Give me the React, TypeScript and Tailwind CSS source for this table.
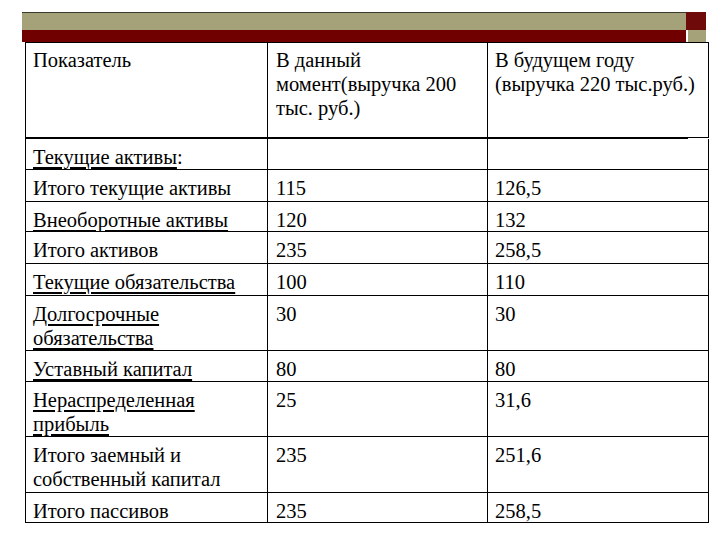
const rows: { label: string[]; u?: boolean; colon?: boolean; a: string; b: string; h: string }[] = [
  { label: ["Текущие активы"], u: true, colon: true, a: "", b: "", h: "h-[31px]" },
  { label: ["Итого текущие активы"], a: "115", b: "126,5", h: "h-[32px]" },
  { label: ["Внеоборотные активы"], u: true, a: "120", b: "132", h: "h-[30px]" },
  { label: ["Итого активов"], a: "235", b: "258,5", h: "h-[32px]" },
  { label: ["Текущие обязательства"], u: true, a: "100", b: "110", h: "h-[32px]" },
  { label: ["Долгосрочные", "обязательства"], u: true, a: "30", b: "30", h: "h-[55px]" },
  { label: ["Уставный капитал"], u: true, a: "80", b: "80", h: "h-[31px]" },
  { label: ["Нераспределенная", "прибыль"], u: true, a: "25", b: "31,6", h: "h-[55px]" },
  { label: ["Итого заемный и", "собственный капитал"], a: "235", b: "251,6", h: "h-[56px]" },
  { label: ["Итого пассивов"], a: "235", b: "258,5", h: "h-[30px]" },
];

function Txt({ children }: { children: React.ReactNode }) {
  return <div className="font-['Liberation_Serif']">{children}</div>;
}

export default function App() {
  return (
    <div className="w-[720px] h-[540px] bg-white overflow-hidden text-[20.5px] leading-[24px]">
      <div className="pt-[12px] pl-[22px]">
        <div className="flex">
          <div className="w-[664px] h-[18px] bg-[#a5a27a] border-t border-[#3a3a2a]" />
          <div className="w-[20px] h-[18px] bg-[#6e0a0a]" />
        </div>
        <div className="flex">
          <div className="w-[664px] h-[12px] bg-[#700000]" />
          <div className="w-[2px]" />
          <div className="w-[18px] h-[12px] bg-[#a5a27a]" />
        </div>
      </div>
      <div className="ml-[25px] w-[684px] border-l border-t border-black">
        <div className="flex h-[94px]">
          <div className="w-[242px] border-r border-black pl-[7px] pt-[5px]">
            <Txt>Показатель</Txt>
          </div>
          <div className="w-[220px] border-r border-black pl-[8px] pt-[5px]">
            <Txt>В данный</Txt>
            <Txt>момент(выручка 200</Txt>
            <Txt>тыс. руб.)</Txt>
          </div>
          <div className="w-[221px] border-r border-black pl-[7px] pt-[5px]">
            <Txt>В будущем году</Txt>
            <Txt>(выручка 220 тыс.руб.)</Txt>
          </div>
        </div>
        <div className="flex h-[2px]">
          <div className="w-[662px] bg-black" />
          <div className="flex-1 border-t border-black" />
        </div>
        {rows.map((r, i) => (
          <div key={i} className={`flex border-b border-black ${r.h}`}>
            <div className="w-[242px] border-r border-black pl-[7px] pt-[6px]">
              {r.label.map((l, j) => (
                <Txt key={j}>
                  <span className={r.u ? "underline underline-offset-[3px]" : ""}>{l}</span>
                  {r.colon ? ":" : ""}
                </Txt>
              ))}
            </div>
            <div className="w-[220px] border-r border-black pl-[8px] pt-[6px]">
              <Txt>{r.a}</Txt>
            </div>
            <div className="w-[221px] border-r border-black pl-[7px] pt-[6px]">
              <Txt>{r.b}</Txt>
            </div>
          </div>
        ))}
      </div>
    </div>
  );
}
